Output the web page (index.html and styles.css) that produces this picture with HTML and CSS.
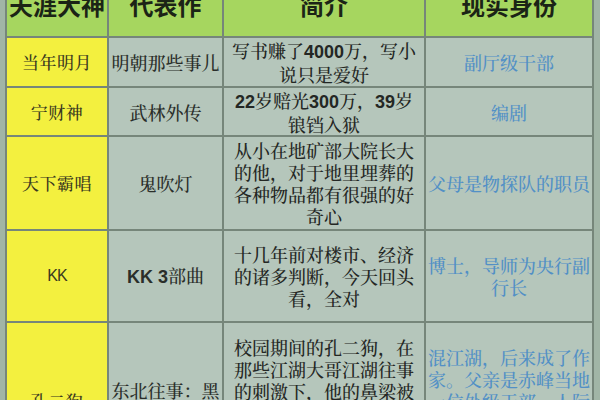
FILE: index.html
```html
<!DOCTYPE html>
<html lang="zh-CN">
<head>
<meta charset="utf-8">
<title>天涯大神</title>
<link rel="stylesheet" href="styles.css">
</head>
<body>
<div class="sheet">
  <div class="cell head"><span>天涯大神</span></div>
  <div class="cell head"><span>代表作</span></div>
  <div class="cell head"><span>简介</span></div>
  <div class="cell head"><span>现实身份</span></div>

  <div class="cell name"><span>当年明月</span></div>
  <div class="cell work"><span>明朝那些事儿</span></div>
  <div class="cell intro"><span>写书赚了<b>4000</b>万，写小<br>说只是爱好</span></div>
  <div class="cell job"><span>副厅级干部</span></div>

  <div class="cell name"><span>宁财神</span></div>
  <div class="cell work"><span>武林外传</span></div>
  <div class="cell intro"><span><b>22</b>岁赔光<b>300</b>万，<b>39</b>岁<br>锒铛入狱</span></div>
  <div class="cell job"><span>编剧</span></div>

  <div class="cell name"><span>天下霸唱</span></div>
  <div class="cell work"><span>鬼吹灯</span></div>
  <div class="cell intro"><span>从小在地矿部大院长大<br>的他，对于地里埋葬的<br>各种物品都有很强的好<br>奇心</span></div>
  <div class="cell job"><span>父母是物探队的职员</span></div>

  <div class="cell name latin"><span>KK</span></div>
  <div class="cell work"><span><b>KK 3</b>部曲</span></div>
  <div class="cell intro"><span>十几年前对楼市、经济<br>的诸多判断，今天回头<br>看，全对</span></div>
  <div class="cell job"><span>博士，导师为央行副<br>行长</span></div>

  <div class="cell name top r5a"><span>孔二狗</span></div>
  <div class="cell work top r5b"><span>东北往事：黑<br>道风云20年</span></div>
  <div class="cell intro top r5c"><span>校园期间的孔二狗，在<br>那些江湖大哥江湖往事<br>的刺激下，他的鼻梁被</span></div>
  <div class="cell job top r5d"><span>混江湖，后来成了作<br>家。父亲是赤峰当地<br>一位处级干部，人际</span></div>
</div>
</body>
</html>
```

FILE: styles.css
```css
html, body {
  margin: 0;
  padding: 0;
  background: #a1b5a6;
  overflow: hidden;
}
body {
  width: 600px;
  height: 400px;
}
.sheet {
  display: grid;
  grid-template-columns: 100px 113px 200px 166px;
  grid-template-rows: 50px 48px 47px 92px 90px 130px;
  gap: 2px;
  padding: 2px;
  width: fit-content;
  margin: -16px 0 0 5px;
  background: #76867a;
  font-family: "Noto Serif CJK SC", "Noto Sans CJK SC", serif;
  font-size: 18px;
  font-weight: 500;
  line-height: 22px;
  color: #262a26;
}
.cell {
  display: flex;
  align-items: center;
  justify-content: center;
  text-align: center;
  background: #b5c6bb;
  white-space: nowrap;
  box-sizing: border-box;
}
.cell b {
  font-family: "Liberation Sans", Arial, sans-serif;
  font-weight: 700;
}
.head {
  background: #a6d65f;
  font-family: "Noto Sans CJK SC", sans-serif;
  font-weight: 700;
  font-size: 24px;
  color: #1b2416;
  padding-bottom: 12px;
}
.name {
  background: #f3f03f;
  color: #3a3920;
  font-size: 17px;
  letter-spacing: 0.5px;
}
.latin {
  font-family: "Liberation Sans", sans-serif;
  font-size: 16px;
  letter-spacing: -1px;
}
.work {
  color: #2a2e2a;
}
.intro {
  color: #242724;
}
.job {
  color: #5290c6;
}
.top {
  align-items: flex-start;
}
.r5a { padding-top: 67px; }
.r5b { padding-top: 56px; }
.r5c { padding-top: 13px; }
.r5d { padding-top: 23px; }
```
